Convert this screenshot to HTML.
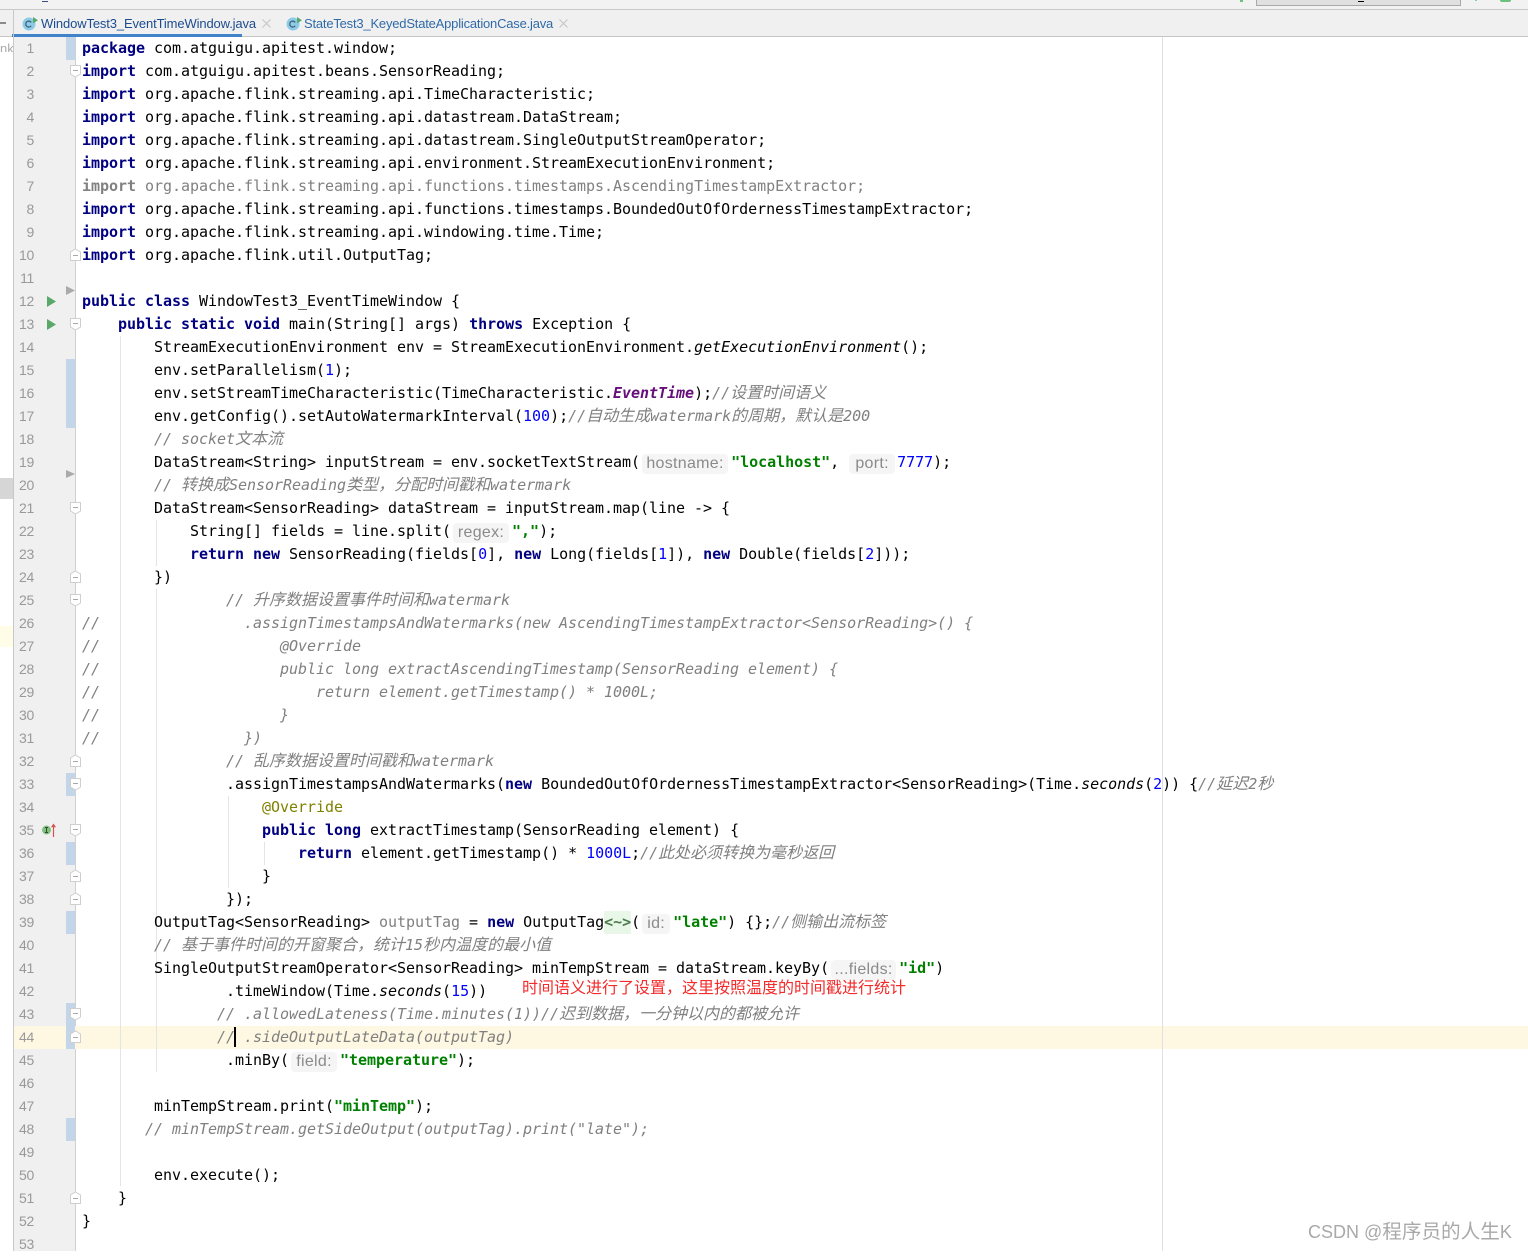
<!DOCTYPE html>
<html><head><meta charset="utf-8"><title>WindowTest3_EventTimeWindow.java</title>
<style>
html,body{margin:0;padding:0;background:#fff;width:1528px;height:1251px;overflow:hidden}
.a{position:absolute}
#code,#nums{position:absolute;top:37px}
#code{left:82px;z-index:3;font:15px/23px "DejaVu Sans Mono","Noto Sans CJK SC",monospace;letter-spacing:-.03px;color:#000}
#code div{height:23px;white-space:pre}
#nums{left:14px;width:20px;text-align:right;z-index:3;font:14px/23px "Liberation Sans",sans-serif;letter-spacing:-.3px;color:#999}
#nums div{height:23px}
b{color:#000080;font-weight:bold}
i{color:#808080;font-style:italic}
u{text-decoration:none;font-size:16px;line-height:0;font-family:"Noto Sans CJK SC",sans-serif;letter-spacing:0}
.s{color:#008000;font-weight:bold}
.n{color:#0000ff}
.m{font-style:italic}
.f{color:#660e7a;font-weight:bold;font-style:italic}
.g{color:#808080}
.o{color:#808000}
.t{color:#4a7a4a;font-weight:bold;background:#e9f7e9;display:inline-block;height:23px}
.h{display:inline-block;height:20px;line-height:20px;vertical-align:-1px;background:#f5f5f5;border-radius:4px;color:#8a8a8a;text-align:center;font:16px/20px "Liberation Sans",sans-serif;letter-spacing:.3px;margin:0 3px 0 2px}
.tab{font:13px/26px "Liberation Sans",sans-serif;top:11px;white-space:nowrap}
</style></head><body>
<div class="a" style="left:0;top:0;width:1528px;height:9px;background:#f2f2f2"></div>
<div class="a" style="left:0;top:9px;width:1528px;height:1px;background:#c9c9c9"></div>
<div class="a" style="left:0;top:10px;width:1528px;height:26px;background:#f0f0f0"></div>
<div class="a" style="left:0;top:36px;width:1528px;height:1px;background:#c6c6c6"></div>
<div class="a" style="left:42px;top:1px;width:6px;height:1px;background:#33507f"></div>
<div class="a" style="left:1256px;top:0;width:203px;height:5px;background:#e0e0e0;border:solid #a8a8a8;border-width:0 1px 1px 1px"></div>
<div class="a" style="left:1358px;top:1px;width:6px;height:1px;background:#000"></div>
<div class="a" style="left:1240px;top:0;width:3px;height:2px;background:#6cc07c"></div>
<div class="a" style="left:1475px;top:0;width:2px;height:1px;background:#8ccf98"></div>
<div class="a" style="left:1500px;top:0;width:11px;height:2px;background:#6cc07c;border-radius:0 0 5px 5px"></div>
<div class="a" style="left:0;top:22px;width:6px;height:2px;background:#8a8a8a"></div>

<div class="a" style="left:12px;top:34px;width:230px;height:3px;background:#4083c9"></div>
<svg class="a" style="left:20px;top:14px" width="20" height="20"><circle cx="9" cy="10" r="6.5" fill="#8ccbe8"/><path d="M11.2 8.4a3 3 0 1 0 0 3.4" fill="none" stroke="#3c5a6e" stroke-width="1.2"/><path d="M13 3l5 3.2-5 3.2z" fill="#59a869"/></svg>
<div class="a tab" style="left:41px;color:#1c4c8f;letter-spacing:-.13px;width:216px">WindowTest3_EventTimeWindow.java</div>
<svg class="a" style="left:262px;top:19px" width="9" height="9"><path d="M.5.5l8 8M8.5.5l-8 8" stroke="#c4c4c4" fill="none"/></svg>
<svg class="a" style="left:284px;top:14px" width="20" height="20"><circle cx="9" cy="10" r="6.5" fill="#8ccbe8"/><path d="M11.2 8.4a3 3 0 1 0 0 3.4" fill="none" stroke="#3c5a6e" stroke-width="1.2"/><path d="M13 3l5 3.2-5 3.2z" fill="#59a869"/></svg>
<div class="a tab" style="left:304px;color:#2f6aa8;letter-spacing:-.2px;width:250px">StateTest3_KeyedStateApplicationCase.java</div>
<svg class="a" style="left:559px;top:19px" width="9" height="9"><path d="M.5.5l8 8M8.5.5l-8 8" stroke="#c4c4c4" fill="none"/></svg>

<div class="a" style="left:0;top:38px;width:13px;height:14px;overflow:hidden;font:13px/22px 'Liberation Sans',sans-serif;color:#aaa;text-align:right">nk</div>
<div class="a" style="left:0;top:478px;width:13px;height:21px;background:#d6d6d6"></div>
<div class="a" style="left:0;top:626px;width:13px;height:21px;background:#fffde8"></div>
<div class="a" style="left:13px;top:10px;width:1px;height:1241px;background:#c8c8c8"></div>
<div class="a" style="left:14px;top:37px;width:61px;height:1214px;background:#f0f0f0"></div>
<div class="a" style="left:75px;top:37px;width:1px;height:1214px;background:#d0d0d0"></div>
<div class="a" style="left:14px;top:1026px;width:1514px;height:23px;background:#fef8e3"></div>
<div class="a" style="left:1162px;top:37px;width:1px;height:1214px;background:#e0e0e0"></div>

<div class="a" style="left:66px;top:37px;width:9px;height:23px;background:#c3d5e8"></div>
<div class="a" style="left:66px;top:359px;width:9px;height:69px;background:#c3d5e8"></div>
<div class="a" style="left:66px;top:773px;width:9px;height:23px;background:#c3d5e8"></div>
<div class="a" style="left:66px;top:842px;width:9px;height:23px;background:#c3d5e8"></div>
<div class="a" style="left:66px;top:911px;width:9px;height:23px;background:#c3d5e8"></div>
<div class="a" style="left:66px;top:1003px;width:9px;height:46px;background:#c3d5e8"></div>
<div class="a" style="left:66px;top:1118px;width:9px;height:23px;background:#c3d5e8"></div>

<div class="a" style="left:120px;top:336px;width:1px;height:850px;background:#e4e4e4"></div>
<div class="a" style="left:156px;top:520px;width:1px;height:46px;background:#e4e4e4"></div>
<div class="a" style="left:156px;top:589px;width:1px;height:483px;background:#e4e4e4"></div>
<div class="a" style="left:228px;top:796px;width:1px;height:92px;background:#e4e4e4"></div>
<div class="a" style="left:264px;top:842px;width:1px;height:23px;background:#e4e4e4"></div>

<svg class="a" style="left:0;top:0;z-index:2" width="100" height="1251">
<defs>
<g id="d"><path d="M70.5 -5.5h10v8.5l-5 3-5-3z" fill="#fff" stroke="#cfcfcf"/><path d="M73 -.5h5" stroke="#a8a8a8"/></g>
<g id="p"><path d="M70.5 5.5h10v-8.5l-5-3-5 3z" fill="#fff" stroke="#cfcfcf"/><path d="M73 .5h5" stroke="#a8a8a8"/></g>
</defs>
<use href="#d" y="71"/><use href="#d" y="324"/><use href="#d" y="508"/><use href="#d" y="600"/><use href="#d" y="784"/><use href="#d" y="830"/><use href="#d" y="1014"/>
<use href="#p" y="255"/><use href="#p" y="577"/><use href="#p" y="761"/><use href="#p" y="876"/><use href="#p" y="899"/><use href="#p" y="1037"/><use href="#p" y="1198"/>
<path d="M66 286l9 4.5-9 4.5z" fill="#aaa"/><path d="M66 470l9 4-9 4z" fill="#aaa"/>
<path d="M47 296l9 5.5-9 5.5z" fill="#59a869"/><path d="M47 319l9 5.5-9 5.5z" fill="#59a869"/>
<circle cx="46.5" cy="830" r="4.5" fill="#82c07f"/><path d="M45 827.5h3M45 832.5h3M46.5 827.5v5" stroke="#2e4d2e" fill="none"/>
<path d="M53.5 837v-10" stroke="#d9534f" stroke-width="1.2"/><path d="M53.5 823.5l2.6 3.7h-5.2z" fill="#d9534f"/>
</svg>

<div class="a" style="left:234px;top:1027px;width:2px;height:20px;background:#000;z-index:4"></div>

<div id="nums"><div>1</div><div>2</div><div>3</div><div>4</div><div>5</div><div>6</div><div>7</div><div>8</div><div>9</div><div>10</div><div>11</div><div>12</div><div>13</div><div>14</div><div>15</div><div>16</div><div>17</div><div>18</div><div>19</div><div>20</div><div>21</div><div>22</div><div>23</div><div>24</div><div>25</div><div>26</div><div>27</div><div>28</div><div>29</div><div>30</div><div>31</div><div>32</div><div>33</div><div>34</div><div>35</div><div>36</div><div>37</div><div>38</div><div>39</div><div>40</div><div>41</div><div>42</div><div>43</div><div>44</div><div>45</div><div>46</div><div>47</div><div>48</div><div>49</div><div>50</div><div>51</div><div>52</div><div style="height:14px;overflow:visible">53</div></div>

<div id="code">
<div><b>package</b> com.atguigu.apitest.window;</div>
<div><b>import</b> com.atguigu.apitest.beans.SensorReading;</div>
<div><b>import</b> org.apache.flink.streaming.api.TimeCharacteristic;</div>
<div><b>import</b> org.apache.flink.streaming.api.datastream.DataStream;</div>
<div><b>import</b> org.apache.flink.streaming.api.datastream.SingleOutputStreamOperator;</div>
<div><b>import</b> org.apache.flink.streaming.api.environment.StreamExecutionEnvironment;</div>
<div class="g"><b class="g" style="color:#808080">import</b> org.apache.flink.streaming.api.functions.timestamps.AscendingTimestampExtractor;</div>
<div><b>import</b> org.apache.flink.streaming.api.functions.timestamps.BoundedOutOfOrdernessTimestampExtractor;</div>
<div><b>import</b> org.apache.flink.streaming.api.windowing.time.Time;</div>
<div><b>import</b> org.apache.flink.util.OutputTag;</div>
<div> </div>
<div><b>public class</b> WindowTest3_EventTimeWindow {</div>
<div>    <b>public static void</b> main(String[] args) <b>throws</b> Exception {</div>
<div>        StreamExecutionEnvironment env = StreamExecutionEnvironment.<span class="m">getExecutionEnvironment</span>();</div>
<div>        env.setParallelism(<span class="n">1</span>);</div>
<div>        env.setStreamTimeCharacteristic(TimeCharacteristic.<span class="f">EventTime</span>);<i>//<u>设置时间语义</u></i></div>
<div>        env.getConfig().setAutoWatermarkInterval(<span class="n">100</span>);<i>//<u>自动生成</u>watermark<u>的周期，默认是</u>200</i></div>
<div>        <i>// socket<u>文本流</u></i></div>
<div>        DataStream&lt;String&gt; inputStream = env.socketTextStream(<span class="h" style="width:86px">hostname:</span><span class="s">"localhost"</span>, <span class="h" style="width:46px;margin:0 2px 0 1px">port:</span><span class="n">7777</span>);</div>
<div>        <i>// <u>转换成</u>SensorReading<u>类型，分配时间戳和</u>watermark</i></div>
<div>        DataStream&lt;SensorReading&gt; dataStream = inputStream.map(line -&gt; {</div>
<div>            String[] fields = line.split(<span class="h" style="width:56px">regex:</span><span class="s">","</span>);</div>
<div>            <b>return new</b> SensorReading(fields[<span class="n">0</span>], <b>new</b> Long(fields[<span class="n">1</span>]), <b>new</b> Double(fields[<span class="n">2</span>]));</div>
<div>        })</div>
<div>                <i>// <u>升序数据设置事件时间和</u>watermark</i></div>
<div><i>//                .assignTimestampsAndWatermarks(new AscendingTimestampExtractor&lt;SensorReading&gt;() {</i></div>
<div><i>//                    @Override</i></div>
<div><i>//                    public long extractAscendingTimestamp(SensorReading element) {</i></div>
<div><i>//                        return element.getTimestamp() * 1000L;</i></div>
<div><i>//                    }</i></div>
<div><i>//                })</i></div>
<div>                <i>// <u>乱序数据设置时间戳和</u>watermark</i></div>
<div>                .assignTimestampsAndWatermarks(<b>new</b> BoundedOutOfOrdernessTimestampExtractor&lt;SensorReading&gt;(Time.<span class="m">seconds</span>(<span class="n">2</span>)) {<i>//<u>延迟</u>2<u>秒</u></i></div>
<div>                    <span class="o">@Override</span></div>
<div>                    <b>public long</b> extractTimestamp(SensorReading element) {</div>
<div>                        <b>return</b> element.getTimestamp() * <span class="n">1000L</span>;<i>//<u>此处必须转换为毫秒返回</u></i></div>
<div>                    }</div>
<div>                });</div>
<div>        OutputTag&lt;SensorReading&gt; <span class="g">outputTag</span> = <b>new</b> OutputTag<span class="t">&lt;~&gt;</span>(<span class="h" style="width:28px">id:</span><span class="s">"late"</span>) {};<i>//<u>侧输出流标签</u></i></div>
<div>        <i>// <u>基于事件时间的开窗聚合，统计</u>15<u>秒内温度的最小值</u></i></div>
<div>        SingleOutputStreamOperator&lt;SensorReading&gt; minTempStream = dataStream.keyBy(<span class="h" style="width:65px">...fields:</span><span class="s">"id"</span>)</div>
<div>                .timeWindow(Time.<span class="m">seconds</span>(<span class="n">15</span>))</div>
<div>               <i>// .allowedLateness(Time.minutes(1))//<u>迟到数据，一分钟以内的都被允许</u></i></div>
<div>               <i>// .sideOutputLateData(outputTag)</i></div>
<div>                .minBy(<span class="h" style="width:46px">field:</span><span class="s">"temperature"</span>);</div>
<div> </div>
<div>        minTempStream.print(<span class="s">"minTemp"</span>);</div>
<div>       <i>// minTempStream.getSideOutput(outputTag).print("late");</i></div>
<div> </div>
<div>        env.execute();</div>
<div>    }</div>
<div>}</div>
</div>

<div class="a" style="left:522px;top:975px;z-index:5;font:16px/22px 'Noto Sans CJK SC',sans-serif;color:#f52a2a;white-space:nowrap">时间语义进行了设置，这里按照温度的时间戳进行统计</div>
<div class="a" style="left:1308px;top:1219px;z-index:5;font:18px/26px 'Liberation Sans','Noto Sans CJK SC',sans-serif;color:#a9a9a9;white-space:nowrap">CSDN @<span style="font-size:19.6px">程序员的人生</span>K</div>
</body></html>
